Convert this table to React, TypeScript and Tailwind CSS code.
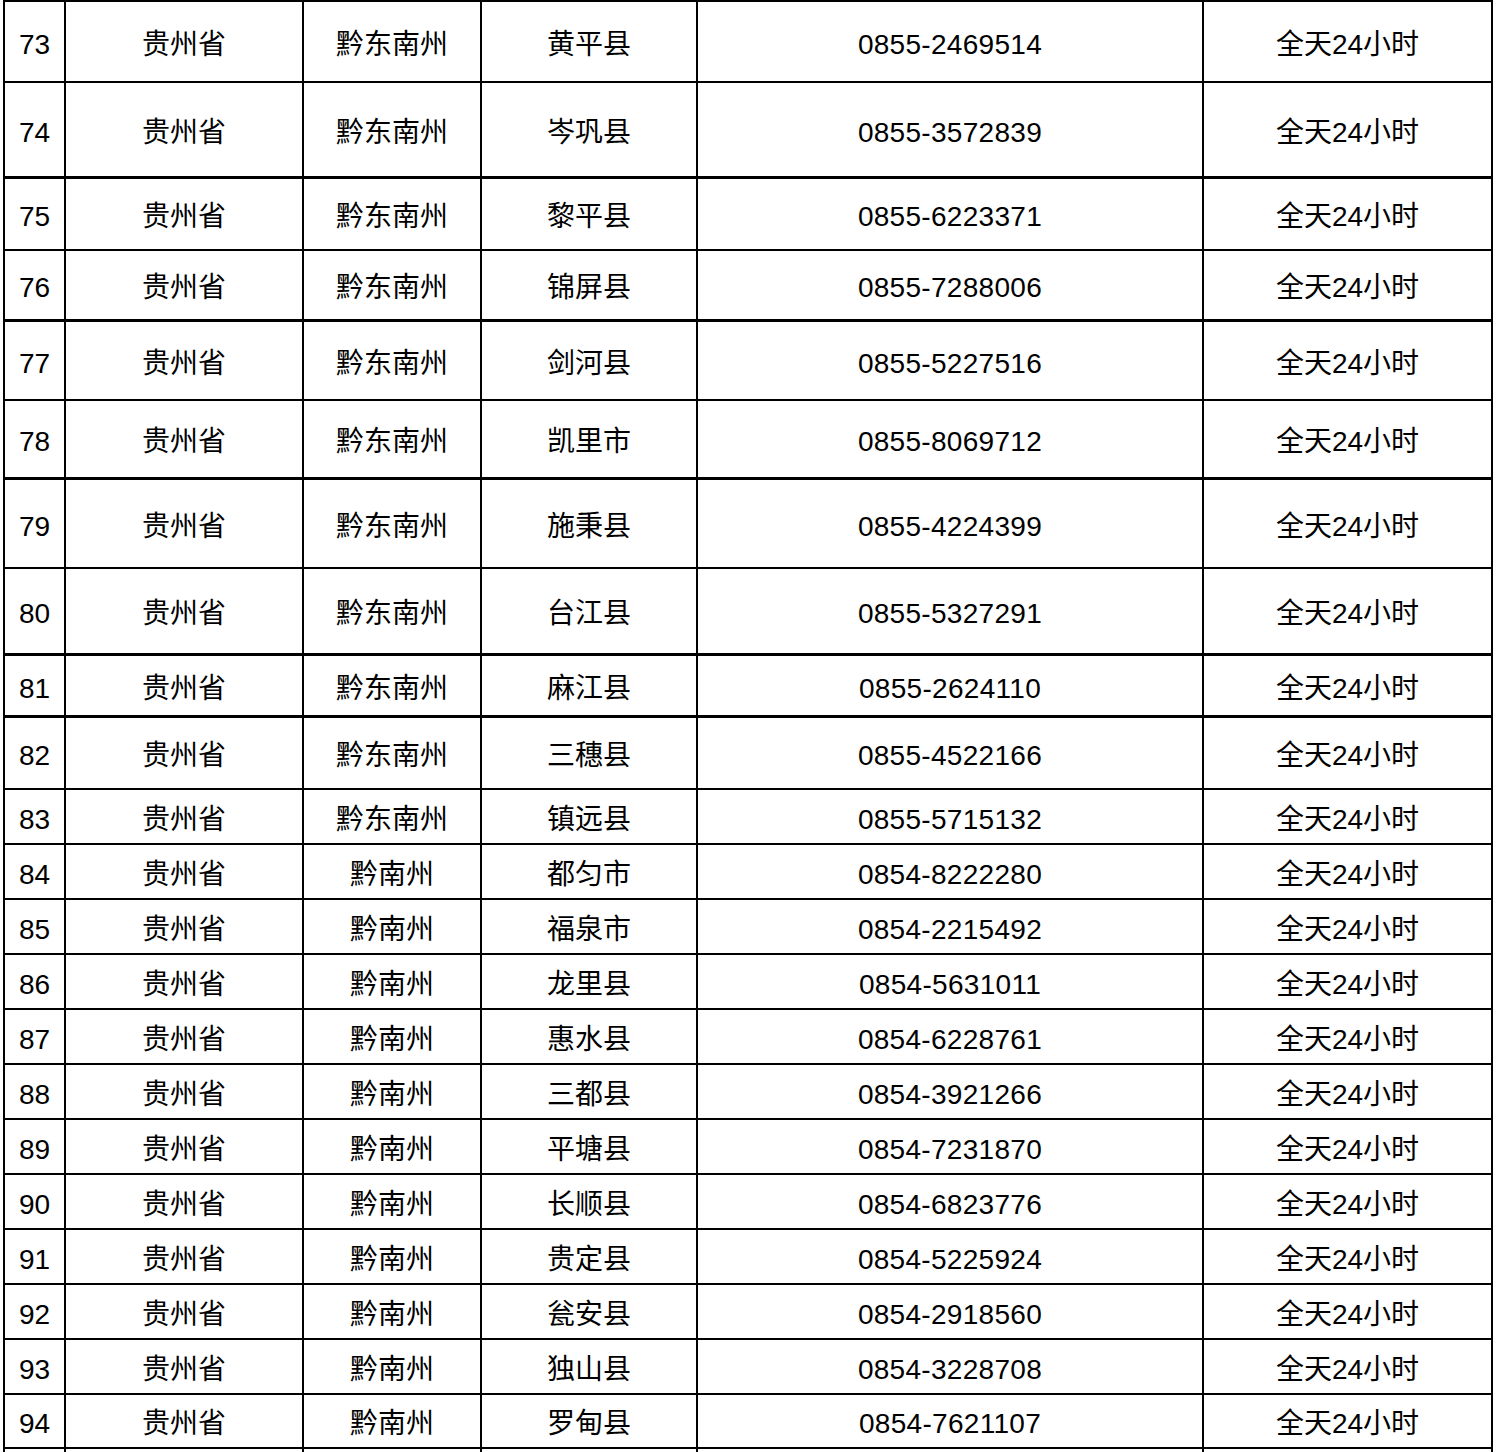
import React from 'react';

type Row = {
  no: number;
  province: string;
  city: string;
  county: string;
  phone: string;
  hours: string;
  h: string;
  thick?: boolean;
};

const rows: Row[] = [
  { no: 73, province: '贵州省', city: '黔东南州', county: '黄平县', phone: '0855-2469514', hours: '全天24小时', h: 'h-[81px]' },
  { no: 74, province: '贵州省', city: '黔东南州', county: '岑巩县', phone: '0855-3572839', hours: '全天24小时', h: 'h-[96px]', thick: true },
  { no: 75, province: '贵州省', city: '黔东南州', county: '黎平县', phone: '0855-6223371', hours: '全天24小时', h: 'h-[72px]' },
  { no: 76, province: '贵州省', city: '黔东南州', county: '锦屏县', phone: '0855-7288006', hours: '全天24小时', h: 'h-[71px]', thick: true },
  { no: 77, province: '贵州省', city: '黔东南州', county: '剑河县', phone: '0855-5227516', hours: '全天24小时', h: 'h-[79px]' },
  { no: 78, province: '贵州省', city: '黔东南州', county: '凯里市', phone: '0855-8069712', hours: '全天24小时', h: 'h-[79px]', thick: true },
  { no: 79, province: '贵州省', city: '黔东南州', county: '施秉县', phone: '0855-4224399', hours: '全天24小时', h: 'h-[89px]' },
  { no: 80, province: '贵州省', city: '黔东南州', county: '台江县', phone: '0855-5327291', hours: '全天24小时', h: 'h-[87px]', thick: true },
  { no: 81, province: '贵州省', city: '黔东南州', county: '麻江县', phone: '0855-2624110', hours: '全天24小时', h: 'h-[62px]', thick: true },
  { no: 82, province: '贵州省', city: '黔东南州', county: '三穗县', phone: '0855-4522166', hours: '全天24小时', h: 'h-[72px]' },
  { no: 83, province: '贵州省', city: '黔东南州', county: '镇远县', phone: '0855-5715132', hours: '全天24小时', h: 'h-[55px]' },
  { no: 84, province: '贵州省', city: '黔南州', county: '都匀市', phone: '0854-8222280', hours: '全天24小时', h: 'h-[55px]' },
  { no: 85, province: '贵州省', city: '黔南州', county: '福泉市', phone: '0854-2215492', hours: '全天24小时', h: 'h-[55px]' },
  { no: 86, province: '贵州省', city: '黔南州', county: '龙里县', phone: '0854-5631011', hours: '全天24小时', h: 'h-[55px]' },
  { no: 87, province: '贵州省', city: '黔南州', county: '惠水县', phone: '0854-6228761', hours: '全天24小时', h: 'h-[55px]' },
  { no: 88, province: '贵州省', city: '黔南州', county: '三都县', phone: '0854-3921266', hours: '全天24小时', h: 'h-[55px]' },
  { no: 89, province: '贵州省', city: '黔南州', county: '平塘县', phone: '0854-7231870', hours: '全天24小时', h: 'h-[55px]' },
  { no: 90, province: '贵州省', city: '黔南州', county: '长顺县', phone: '0854-6823776', hours: '全天24小时', h: 'h-[55px]' },
  { no: 91, province: '贵州省', city: '黔南州', county: '贵定县', phone: '0854-5225924', hours: '全天24小时', h: 'h-[55px]' },
  { no: 92, province: '贵州省', city: '黔南州', county: '瓮安县', phone: '0854-2918560', hours: '全天24小时', h: 'h-[55px]' },
  { no: 93, province: '贵州省', city: '黔南州', county: '独山县', phone: '0854-3228708', hours: '全天24小时', h: 'h-[55px]' },
  { no: 94, province: '贵州省', city: '黔南州', county: '罗甸县', phone: '0854-7621107', hours: '全天24小时', h: 'h-[54px]' },
];

const cell = 'flex items-center justify-center border-r-2 border-black pt-[6px]';

export default function App() {
  return (
    <div
      className="h-[1452px] overflow-hidden bg-white text-[28px] text-black"
      style={{ fontFamily: '"Liberation Sans", "Noto Sans CJK SC", sans-serif' }}
    >
      <div className="ml-[3px] w-[1490px] border-l-2 border-t-2 border-black">
        {rows.map((r) => (
          <div
            key={r.no}
            className={`flex ${r.h} ${r.thick ? 'border-b-[3px]' : 'border-b-2'} border-black`}
          >
            <div className="flex w-[61px] items-center border-r-2 border-black pl-[14px] pt-[6px]">{r.no}</div>
            <div className={`${cell} w-[238px]`}>{r.province}</div>
            <div className={`${cell} w-[178px]`}>{r.city}</div>
            <div className={`${cell} w-[216px]`}>{r.county}</div>
            <div className={`${cell} w-[506px] tracking-[0.3px]`}>{r.phone}</div>
            <div className={`${cell} w-[289px]`}>{r.hours}</div>
          </div>
        ))}
        <div className="flex h-[55px]">
          <div className="w-[61px] border-r-2 border-black" />
          <div className="w-[238px] border-r-2 border-black" />
          <div className="w-[178px] border-r-2 border-black" />
          <div className="w-[216px] border-r-2 border-black" />
          <div className="w-[506px] border-r-2 border-black" />
          <div className="w-[289px] border-r-2 border-black" />
        </div>
      </div>
    </div>
  );
}
